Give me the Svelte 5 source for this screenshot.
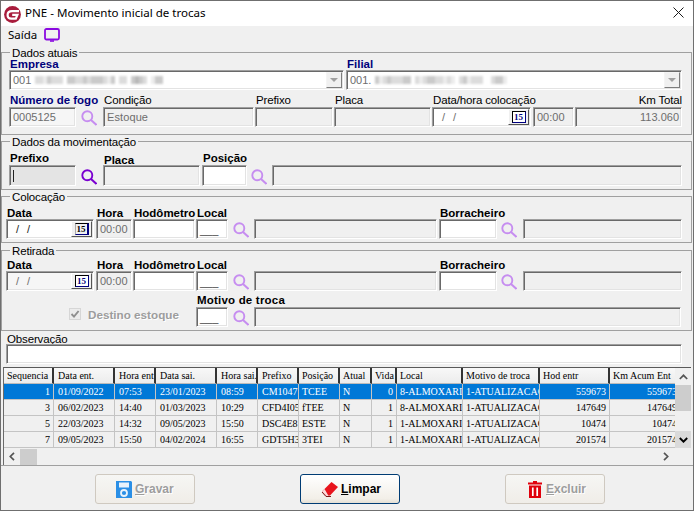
<script>
  const shades = ['#ffffff', '#ececec', '#dcdcdc', '#cacaca', '#b8b8b8'];
  const empresa = '2213222 332232333213 2203432 133';
  const filial = '312322233 2123322121 2312220 2331';
  const cols = [50, 61, 41, 61, 41, 41, 41, 32, 25, 66, 77, 70, 71];
  const heads = ['Sequencia', 'Data ent.', 'Hora ent', 'Data sai.', 'Hora sai.', 'Prefixo', 'Posição', 'Atual', 'Vida', 'Local', 'Motivo de troca', 'Hod entr', 'Km Acum Ent'];
  const numeric = [0, 8, 11, 12];
  const rows = [
    ['1', '01/09/2022', '07:53', '23/01/2023', '08:59', 'CM1047', 'TCEE', 'N', '0', '8-ALMOXARIFADO', '1-ATUALIZACAO', '559673', '559673'],
    ['3', '06/02/2023', '14:40', '01/03/2023', '10:29', 'CFD4I05', 'fTEE', 'N', '1', '8-ALMOXARIFADO', '1-ATUALIZACAO', '147649', '147649'],
    ['5', '22/03/2023', '14:32', '09/05/2023', '15:50', 'DSC4E81', 'ESTE', 'N', '1', '1-ALMOXARIFADO', '1-ATUALIZACAO', '10474', '10474'],
    ['7', '09/05/2023', '15:50', '04/02/2024', '16:55', 'GDT5H3', '3TEI', 'N', '1', '1-ALMOXARIFADO', '1-ATUALIZACAO', '201574', '201574']
  ];
</script>

{#snippet lupa(cls)}
  <svg class="lupa {cls}" viewBox="0 0 16 16" width="16" height="16" aria-hidden="true">
    <circle cx="6.3" cy="6.3" r="5" fill="none" stroke="currentColor" stroke-width="1.9" />
    <path d="M10 10 L15.5 15" stroke="currentColor" stroke-width="2" fill="none" />
  </svg>
{/snippet}

{#snippet cal(cls)}
  <div class="calbtn {cls}"><span class="calface">15</span></div>
{/snippet}

{#snippet mosaic(p)}
  <span class="mosaic">
    {#each p.split('') as c}
      <i style:background={c === ' ' ? '#fff' : shades[+c]}></i>
    {/each}
  </span>
{/snippet}

<div class="win">
  <header class="title">
    <svg class="logo" viewBox="0 0 17 17" width="17" height="17" aria-hidden="true">
      <circle cx="8.5" cy="8.5" r="8.4" fill="#a81c3c" />
      <path d="M15 5.2 H8 C4.8 5.2 3.6 7.2 3.6 9 C3.6 11.2 5.2 12.6 7.2 12.6 H11.8 L13.4 8.8 H8.2" fill="none" stroke="#fff" stroke-width="2.2" />
    </svg>
    <span class="ttext">PNE - Movimento inicial de trocas</span>
    <svg class="close" viewBox="0 0 11 11" width="11" height="11" aria-hidden="true">
      <path d="M.5 .5 L10.5 10.5 M10.5 .5 L.5 10.5" stroke="#1a1a1a" stroke-width="1" fill="none" />
    </svg>
  </header>

  <nav class="menu">
    <span class="mtext">Saída</span>
    <svg class="mon" viewBox="0 0 16 14" width="16" height="14" aria-hidden="true">
      <rect x="1" y="1" width="14" height="10.5" rx="1.5" fill="none" stroke="#8a0ae0" stroke-width="1.8" />
      <path d="M6 13 H10" stroke="#8a0ae0" stroke-width="1.6" />
    </svg>
  </nav>

  <fieldset class="g1">
    <legend>Dados atuais</legend>
    <div class="row p7">
      <div class="f w335">
        <div class="lb nv h12">Empresa</div>
        <div class="in dis white combo">
          <span class="val">001</span>{@render mosaic(empresa)}
          <div class="dd"><b></b></div>
        </div>
      </div>
      <div class="f w336 ml2">
        <div class="lb nv h12">Filial</div>
        <div class="in dis white combo">
          <span class="val">001.</span>{@render mosaic(filial)}
          <div class="dd"><b></b></div>
        </div>
      </div>
    </div>
    <div class="row p7 mt4">
      <div class="f w67">
        <div class="lb nv h13">Número de fogo</div>
        <div class="in dis soft"><span class="val">0005125</span></div>
      </div>
      {@render lupa('fade ml5')}
      <div class="f w151 ml6">
        <div class="lr h13">Condição</div>
        <div class="in dis"><span class="val sp">Estoque</span></div>
      </div>
      <div class="f w78 ml1">
        <div class="lr h13">Prefixo</div>
        <div class="in dis"></div>
      </div>
      <div class="f w97 ml1">
        <div class="lr h13">Placa</div>
        <div class="in dis"></div>
      </div>
      <div class="f w99 ml1">
        <div class="lr h13">Data/hora colocação</div>
        <div class="in white date"><span class="val slash">/ /</span>{@render cal('hard')}</div>
      </div>
      <div class="f w41 ml2">
        <div class="h13"></div>
        <div class="in dis"><span class="val">00:00</span></div>
      </div>
      <div class="f w107 ml1">
        <div class="lr h13 rt">Km Total</div>
        <div class="in dis rtv"><span class="val">113.060</span></div>
      </div>
    </div>
  </fieldset>

  <fieldset class="g2">
    <legend>Dados da movimentação</legend>
    <div class="row p7">
      <div class="f w67">
        <div class="lb h13">Prefixo</div>
        <div class="in tall act"><i class="caret"></i></div>
      </div>
      {@render lupa('strong ml5')}
      <div class="f w97 ml6">
        <div class="lb h13 low">Placa</div>
        <div class="in tall dis"></div>
      </div>
      <div class="f w45 ml2">
        <div class="lb h13">Posição</div>
        <div class="in tall white"></div>
      </div>
      {@render lupa('fade ml4')}
      <div class="f w410 ml5">
        <div class="h13"></div>
        <div class="in tall dis"></div>
      </div>
    </div>
  </fieldset>

  <fieldset class="g3">
    <legend>Colocação</legend>
    <div class="row p4">
      <div class="f w88">
        <div class="lb h12">Data</div>
        <div class="in white date"><span class="val slash dark">/ /</span>{@render cal('light')}</div>
      </div>
      <div class="f w36 ml2">
        <div class="lb h12">Hora</div>
        <div class="in dis"><span class="val">00:00</span></div>
      </div>
      <div class="f w62 ml1">
        <div class="lb h12">Hodômetro</div>
        <div class="in white"></div>
      </div>
      <div class="f w32 ml1">
        <div class="lb h12">Local</div>
        <div class="in white"><span class="val us">___</span></div>
      </div>
      {@render lupa('fade ml5')}
      <div class="f w183 ml5">
        <div class="h12"></div>
        <div class="in dis"></div>
      </div>
      <div class="f w58 ml2">
        <div class="lb h12">Borracheiro</div>
        <div class="in white"></div>
      </div>
      {@render lupa('fade ml4')}
      <div class="f w159 ml6">
        <div class="h12"></div>
        <div class="in dis"></div>
      </div>
    </div>
  </fieldset>

  <fieldset class="g4">
    <legend>Retirada</legend>
    <div class="row p4">
      <div class="f w88">
        <div class="lb h12">Data</div>
        <div class="in soft date"><span class="val slash">/ /</span>{@render cal('hard')}</div>
      </div>
      <div class="f w36 ml2">
        <div class="lb h12">Hora</div>
        <div class="in dis"><span class="val">00:00</span></div>
      </div>
      <div class="f w62 ml1">
        <div class="lb h12">Hodômetro</div>
        <div class="in white"></div>
      </div>
      <div class="f w32 ml1">
        <div class="lb h12">Local</div>
        <div class="in white"><span class="val us">___</span></div>
      </div>
      {@render lupa('fade ml5')}
      <div class="f w183 ml5">
        <div class="h12"></div>
        <div class="in dis"></div>
      </div>
      <div class="f w58 ml2">
        <div class="lb h12">Borracheiro</div>
        <div class="in white"></div>
      </div>
      {@render lupa('fade ml4')}
      <div class="f w159 ml6">
        <div class="h12"></div>
        <div class="in dis"></div>
      </div>
    </div>
    <div class="row p4 mt4">
      <div class="destino">
        <span class="chk">
          <svg viewBox="0 0 12 12" width="12" height="12" aria-hidden="true">
            <path d="M2.5 6 L5 8.6 L9.6 3" fill="none" stroke="#8f8f8f" stroke-width="1.9" />
          </svg>
        </span>
        <span class="dtext">Destino estoque</span>
      </div>
      <div class="f w32">
        <div class="lb h12 nw wide">Motivo de troca</div>
        <div class="in white"><span class="val us">___</span></div>
      </div>
      {@render lupa('fade ml5')}
      <div class="f w427 ml5">
        <div class="h12"></div>
        <div class="in dis"></div>
      </div>
    </div>
  </fieldset>

  <section class="obs">
    <div class="lr h10">Observação</div>
    <div class="in white"></div>
  </section>

  <section class="grid">
    <div class="tblwrap">
      <table>
        <colgroup>
          {#each cols as c}<col style:width="{c}px" />{/each}
        </colgroup>
        <thead>
          <tr>{#each heads as h}<th>{h}</th>{/each}</tr>
        </thead>
        <tbody>
          {#each rows as r, i}
            <tr class:sel={i === 0}>
              {#each r as v, j}<td class:num={numeric.includes(j)}>{v}</td>{/each}
            </tr>
          {/each}
        </tbody>
      </table>
    </div>
    <div class="vs">
      <div class="arr up">
        <svg viewBox="0 0 9 6" width="9" height="6" aria-hidden="true"><path d="M.8 5 L4.5 1.3 L8.2 5" fill="none" stroke="#555" stroke-width="1.7" /></svg>
      </div>
      <div class="vthumb"></div>
      <div class="vfill"></div>
      <div class="arr down">
        <svg viewBox="0 0 9 6" width="9" height="6" aria-hidden="true"><path d="M.8 1 L4.5 4.7 L8.2 1" fill="none" stroke="#000" stroke-width="1.9" /></svg>
      </div>
    </div>
    <div class="hs">
      <svg class="hl" viewBox="0 0 6 9" width="6" height="9" aria-hidden="true"><path d="M5 .8 L1.3 4.5 L5 8.2" fill="none" stroke="#555" stroke-width="1.7" /></svg>
      <div class="hthumb"></div>
      <svg class="hr" viewBox="0 0 6 9" width="6" height="9" aria-hidden="true"><path d="M1 .8 L4.7 4.5 L1 8.2" fill="none" stroke="#555" stroke-width="1.7" /></svg>
    </div>
  </section>

  <footer class="foot">
    <div class="btn off">
      <svg class="ic" viewBox="0 0 16 17" width="16" height="17" aria-hidden="true">
        <path d="M0 0 H15 L16 1 V17 H0 Z" fill="#2b8fe6" />
        <rect x="3" y="1.5" width="10" height="5" fill="#e8f2fb" />
        <circle cx="8" cy="12" r="3" fill="none" stroke="#e8f2fb" stroke-width="1.8" />
      </svg>
      <span><u>G</u>ravar</span>
    </div>
    <div class="btn on">
      <svg class="ic" viewBox="0 0 18 17" width="18" height="17" aria-hidden="true">
        <path d="M1 10.5 L10.5 1 L17 6 L9 14.5 L5 15 Z" fill="#e8141c" />
        <path d="M1 10.5 L5.5 15 L7.5 15 L3.6 8 Z" fill="#fbdcdc" />
        <path d="M1 11 L5 15.5 L10 15.5" fill="none" stroke="#7a1a1a" stroke-width="1" />
      </svg>
      <span><u>L</u>impar</span>
    </div>
    <div class="btn off">
      <svg class="ic tr" viewBox="0 0 14 17" width="14" height="17" aria-hidden="true">
        <path d="M5 0 H9 V1.5 H14 V3.5 H0 V1.5 H5 Z" fill="#e0000c" />
        <path d="M1 4.5 H13 V17 H1 Z" fill="#e0000c" />
        <path d="M4.8 6.5 V15 M9.2 6.5 V15" stroke="#fff" stroke-width="1.7" />
      </svg>
      <span><u>E</u>xcluir</span>
    </div>
  </footer>
</div>

<style>
  :global(body) { margin: 0; background: #f0f0f0; }
  .win {
    width: 694px; height: 511px; box-sizing: border-box; overflow: hidden;
    border: 1px solid #6f6f6f; background: #f0f0f0;
    font-family: "Liberation Sans", Arial, sans-serif; font-size: 12px; color: #000;
  }
  .title {
    height: 25px; background: #fff; display: flex; align-items: center; padding-left: 3px;
  }
  .logo { margin-top: 2px; }
  .ttext { font-family: "Noto Sans", sans-serif; font-size: 11.55px; margin-left: 4px; margin-top: -2px; color: #000; }
  .close { margin-left: auto; margin-right: 9px; margin-top: -2px; }
  .menu {
    height: 20px; box-sizing: border-box; padding: 0 0 4px 7px; display: flex; align-items: center;
    font-family: "Noto Sans", sans-serif; font-size: 11.5px;
  }
  .mtext { width: 28px; }
  .mon { margin-left: 8px; margin-top: 1px; }

  fieldset {
    display: block; box-sizing: border-box; width: 691px; min-width: 0; margin: 0; padding: 0 0 0 0;
    border: 1px solid #a0a0a0; border-radius: 0;
  }
  legend {
    padding: 0 2px; margin-left: 8px; font-size: 11.5px; letter-spacing: -.15px; line-height: 14px; height: 12px; color: #000;
  }
  .g1 { padding-bottom: 7px; }
  .g2 { padding-top: 5px; padding-bottom: 3px; }
  .g3 { padding-top: 5px; padding-bottom: 3px; }
  .g4 { padding-top: 3px; padding-bottom: 3px; margin-top: 1px; }

  .row { display: flex; align-items: flex-end; }
  .p7 { padding-left: 7px; }
  .p4 { padding-left: 4px; }
  .mt4 { margin-top: 4px; }
  .f { display: flex; flex-direction: column; flex: none; }
  .w32 { width: 32px; } .w36 { width: 36px; } .w41 { width: 41px; } .w45 { width: 45px; }
  .w58 { width: 58px; } .w62 { width: 62px; } .w67 { width: 67px; } .w78 { width: 78px; }
  .w88 { width: 88px; } .w97 { width: 97px; } .w99 { width: 99px; } .w107 { width: 107px; }
  .w151 { width: 151px; } .w159 { width: 159px; } .w183 { width: 183px; } .w335 { width: 335px; }
  .w336 { width: 336px; } .w410 { width: 410px; } .w427 { width: 427px; }
  .ml1 { margin-left: 1px; } .ml2 { margin-left: 2px; }
  .ml5 { margin-left: 5px; } .ml6 { margin-left: 6px; }
  :global(.lupa.ml4) { margin-left: 4px; }
  :global(.lupa.ml5) { margin-left: 5px; }
  .h10 { height: 10px; line-height: 10px; } .h12 { height: 12px; line-height: 12px; }
  .h13 { height: 13px; line-height: 12px; }
  .lb { font-weight: 700; font-size: 11.5px; padding-left: 1px; white-space: nowrap; }
  .wide { letter-spacing: .2px; line-height: 10px; }
  .nv { color: #00007b; }
  .low { line-height: 16px; }
  .lr { font-size: 11.5px; letter-spacing: -.15px; padding-left: 1px; white-space: nowrap; }
  .rt { text-align: right; }

  .in {
    box-sizing: border-box; height: 20px; position: relative; display: flex; align-items: center;
    border: 1px solid; border-color: #9f9f9f #ffffff #ffffff #9f9f9f;
    box-shadow: inset 1px 1px 0 #696969, inset -1px -1px 0 #e3e3e3;
    background: #f0f0f0; overflow: hidden; padding-left: 3px;
  }
  .tall { height: 21px; }
  .white { background: #fff; }
  .soft { background: #f6f6f6; }
  .act { background: #e4e4e4; }
  .val { color: #6d6d6d; font-size: 11px; white-space: nowrap; }
  .sp { letter-spacing: .1px; }
  .rtv { justify-content: flex-end; padding-right: 2px; }
  .slash { margin-left: 6px; color: #6d6d6d; letter-spacing: 2.5px; }
  .dark { color: #222; }
  .us { color: #444; font-size: 11px; letter-spacing: 0; margin-top: 2px; }
  .caret { width: 1px; height: 12px; background: #222; margin-left: 0; }
  .combo { overflow: hidden; }
  .mosaic { display: inline-flex; height: 8px; margin-left: 4px; filter: blur(.8px); }
  .mosaic i { display: block; width: 4px; height: 8px; }
  .dd {
    position: absolute; right: 1px; top: 1px; bottom: 1px; width: 16px; box-sizing: border-box;
    background: #f0f0f0; border: 1px solid; border-color: #f4f4f4 #7d7d7d #7d7d7d #f4f4f4;
    display: flex; align-items: center; justify-content: center;
  }
  .dd b { display: block; width: 0; height: 0; border: 4px solid transparent; border-top-color: #a0a0a0; border-bottom: 0; }

  .date { overflow: hidden; }
  .calbtn {
    position: absolute; right: 1px; top: 1px; bottom: 1px; width: 21px; box-sizing: border-box;
    background: #f0f0f0; border: 1px solid; border-color: #fff #555 #555 #fff;
    display: flex; align-items: center; justify-content: center;
  }
  .calface {
    box-sizing: border-box; width: 14px; height: 12px; background: #fff; display: block; text-align: center;
    font: 700 9px/10px "Liberation Serif", serif; color: #000080;
    border: 1px solid #000; border-right-color: #000080; border-bottom-color: #000080;
  }
  .calbtn.light .calface { background: #f0f0f0; border: 0; border-top: 1px solid #000; border-bottom: 1px solid #000080; border-left: 1px solid #aaa; border-right: 2px solid #000080; line-height: 10px; color: #000; }

  .lupa { flex: none; margin-bottom: 1px; }
  :global(.lupa.fade) { color: #c68df0; }
  :global(.lupa.strong) { color: #7a00d0; }

  .destino { width: 190px; height: 20px; box-sizing: border-box; padding: 0 0 6px 63px; display: flex; align-items: center; flex: none; }
  .chk {
    width: 12px; height: 12px; box-sizing: border-box; background: #ececec; border: 1px solid #d6d6d6;
    display: flex; align-items: center; justify-content: center; flex: none;
  }
  .chk svg { flex: none; }
  .dtext { margin-left: 7px; font-weight: 700; font-size: 11.7px; color: #9d9d9d; text-shadow: 1px 1px 0 #fff; white-space: nowrap; }
  .nw { overflow: visible; }

  .obs { padding: 3px 0 3px 5px; }
  .obs .in { width: 676px; }

  .grid {
    width: 688px; margin-left: 2px; display: grid; grid-template-columns: 671px 16px; grid-template-rows: 80px 17px;
    border-top: 1px solid #5a5a5a; border-left: 1px solid #6a6a6a; box-sizing: border-box; height: 98px;
  }
  .tblwrap { overflow: hidden; background: #f0f0f0; }
  table {
    border-collapse: separate; border-spacing: 0; table-layout: fixed; width: 677px;
    font-family: "Liberation Serif", serif; font-size: 10px; color: #000;
  }
  th {
    height: 16px; box-sizing: border-box; padding: 0 0 0 4px; font-weight: 400; text-align: left; white-space: nowrap; overflow: hidden;
    background: linear-gradient(#f8f8f8, #ececec);
    border-right: 2px solid #333; border-bottom: 1px solid #bbb; line-height: 15px;
  }
  th:first-child { padding-left: 3px; }
  td {
    height: 16px; box-sizing: border-box; padding: 0 0 0 4px; white-space: nowrap; overflow: hidden;
    border-right: 1px solid #c4c4c4; border-bottom: 1px solid #c4c4c4; line-height: 15px; background: #f0f0f0;
  }
  td:nth-child(n + 7), th:nth-child(n + 7) { padding-left: 3px; }
  td.num { text-align: right; padding: 0 3px 0 0; }
  tr.sel td { background: #0078d7; color: #fff; }

  .vs { display: flex; flex-direction: column; width: 16px; background: #f0f0f0; margin-left: 0; }
  .arr { height: 17px; display: flex; align-items: center; justify-content: center; flex: none; }
  .arr.up { height: 17px; }
  .arr.down { background: #dadada; }
  .vthumb { height: 26px; background: #cdcdcd; flex: none; }
  .vfill { flex: 1; }
  .hs { grid-column: 1 / 3; display: flex; align-items: center; position: relative; background: #f0f0f0; }
  .hl { margin-left: 5px; }
  .hthumb { width: 17px; height: 16px; background: #cdcdcd; margin-left: 5px; }
  .hr { margin-left: auto; margin-right: 22px; }

  .foot {
    width: 692px; height: 46px; box-sizing: border-box; border-top: 1px solid #a0a0a0;
    display: flex; gap: 105px; padding: 8px 0 0 94px;
  }
  .btn {
    width: 100px; height: 30px; box-sizing: border-box; border-radius: 3px; display: flex; align-items: center;
    font-size: 12px; font-weight: 700;
  }
  .off {
    border: 1px solid #cfc9c0; background: linear-gradient(#f6f6f4, #f0ede8); color: #9d9d9d; text-shadow: 1px 1px 0 #fff;
  }
  .on {
    border: 1px solid #003c74; background: linear-gradient(#fff, #f2efe8 85%, #e4dfd4); color: #000;
  }
  .ic { flex: none; margin-left: 20px; margin-right: 3px; }
  .on .ic { margin-right: 2px; }
  .ic.tr { margin-left: 22px; margin-right: 4px; }
</style>
